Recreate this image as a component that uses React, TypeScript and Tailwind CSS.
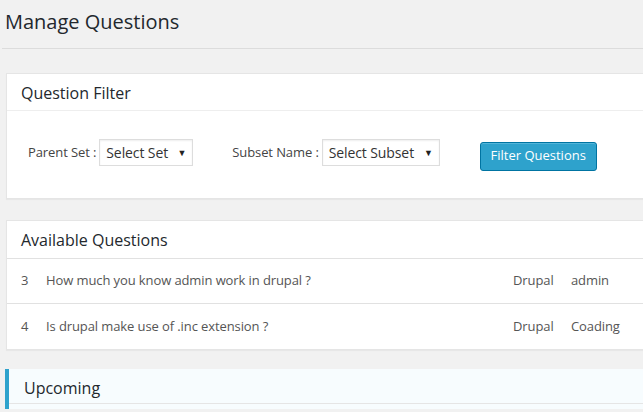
import React from "react";

const rows = [
  { n: "3", q: "How much you know admin work in drupal ?", a: "Drupal", b: "admin" },
  { n: "4", q: "Is drupal make use of .inc extension ?", a: "Drupal", b: "Coading" },
];

function Select({ label, w }: { label: string; w: string }) {
  return (
    <div
      className={`${w} h-[27px] border border-[#dddddd] bg-white flex items-center justify-between pl-[6px] pr-[6px] text-[14px] text-[#333333] shadow-[inset_0_1px_2px_rgba(0,0,0,0.07)]`}
    >
      <span>{label}</span>
      <span className="text-[9px] text-[#222]">▼</span>
    </div>
  );
}

export default function App() {
  return (
    <div
      className="w-full h-[412px] overflow-hidden bg-[#f1f1f1] text-[#444444]"
      style={{ fontFamily: '"Open Sans", "Noto Sans", sans-serif' }}
    >
      <div className="w-[700px]">
        <h2 className="pl-[5px] pt-[7px] h-[48px] text-[20px] leading-[30px] text-[#23282d] font-normal">
          Manage Questions
        </h2>
        <div className="h-px bg-[#dcdcdc] ml-[2px]" />

        <div className="ml-[6px] mt-[24px] w-[680px] bg-white border border-[#e5e5e5] shadow-[0_1px_1px_rgba(0,0,0,0.04)]">
          <div className="h-[37px] border-b border-[#eeeeee] pl-[14px] pt-[2px] flex items-center text-[16px] text-[#23282d]">
            Question Filter
          </div>
          <div className="h-[87px] flex items-center pl-[21px] pb-[4px] text-[13px] tracking-[-0.1px] text-[#444]">
            <span className="mr-[3px]">Parent Set :</span>
            <Select label="Select Set" w="w-[94px]" />
            <span className="ml-[39px] mr-[3px]">Subset Name :</span>
            <Select label="Select Subset" w="w-[118px]" />
            <button className="ml-[40px] mt-[7px] w-[117px] h-[29px] rounded-[3px] bg-[#2ea2cc] border border-[#0074a2] text-white text-[13px] tracking-normal shadow-[inset_0_1px_0_rgba(120,200,230,0.5)]">
              Filter Questions
            </button>
          </div>
        </div>

        <div className="ml-[6px] mt-[21px] w-[680px] bg-white border border-[#e5e5e5] shadow-[0_1px_1px_rgba(0,0,0,0.04)]">
          <div className="h-[38px] border-b border-[#e1e1e1] pl-[14px] flex items-center text-[16px] text-[#23282d]">
            Available Questions
          </div>
          {rows.map((r, i) => (
            <div
              key={r.n}
              className={`h-[45px] flex items-center text-[13px] tracking-[-0.1px] text-[#555] ${i === 0 ? "border-b border-[#e1e1e1]" : ""}`}
            >
              <div className="w-[39px] pl-[14px]">{r.n}</div>
              <div className="flex-1">{r.q}</div>
              <div className="w-[58px]">{r.a}</div>
              <div className="w-[114px]">{r.b}</div>
            </div>
          ))}
        </div>

        <div className="ml-[5px] mt-[19px] w-[681px] h-[40px] bg-[#f7fcfe] border-l-4 border-[#2ea2cc]">
          <div className="h-[35px] border-b border-[#e5e5e5] pl-[15px] pt-[4px] flex items-center text-[16px] text-[#23282d]">
            Upcoming
          </div>
        </div>
      </div>
    </div>
  );
}
